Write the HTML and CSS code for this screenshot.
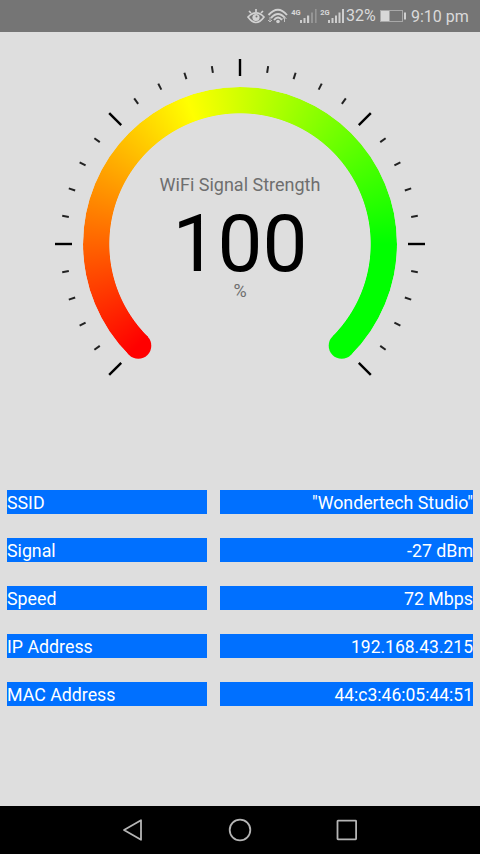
FILE: index.html
```html
<!DOCTYPE html>
<html lang="en">
<head>
    <meta charset="UTF-8">
    <meta name="viewport" content="width=device-width, initial-scale=1.0">
    <title>WiFi Signal Strength</title>
    <link rel="stylesheet" href="styles.css">
</head>
<body>
    <header class="status-bar">
        <svg class="status-icons" width="100" height="32" viewBox="0 0 100 32">
            <!-- eye -->
            <g fill="none" stroke="#d2d2d2" stroke-width="1.7">
                <path d="M2 17Q10 9 18 17Q10 28 2 17Z"/>
                <path d="M3 11l2 2M10 9v3M17 11l-2 2"/>
            </g>
            <circle cx="10" cy="17.5" r="3.6" fill="#d2d2d2"/>
            <circle cx="10.5" cy="16.5" r="1" fill="#757575"/>
            <!-- wifi -->
            <g fill="none" stroke="#d2d2d2" stroke-width="1.9">
                <path d="M22.5 15Q32 4.5 41 15"/>
                <path d="M25 18Q32 10 39 18"/>
                <path d="M28 20Q32 15 36 20"/>
            </g>
            <circle cx="32" cy="21.5" r="1.8" fill="#d2d2d2"/>
            <path d="M24 17v5M22 20l2 2l2-2M38.5 22v-5M36.5 19l2-2l2 2" fill="none" stroke="#c2c2c2"/>
            <!-- signal bars -->
            <g fill="#cecece">
                <path d="M54 20h2v3h-2zM57.5 18h2v5h-2zM61 15.5h2.2v7.5H61z"/>
                <path d="M82 20h2v3h-2zM85.5 18h2v5h-2zM89 15.5h2v7.5h-2zM92.5 12.5h2v10.5h-2zM96 9h2v14h-2z"/>
            </g>
            <path d="M65 12.5h2v10.5h-2zM69 9h1.6v14H69z" fill="#969696"/>
            <text x="45.3" y="15">4G</text>
            <text x="74.3" y="15">2G</text>
        </svg>
        <span class="percent">32%</span>
        <svg class="battery" width="28" height="32" viewBox="0 0 28 32">
            <rect x="1.5" y="10.5" width="22" height="11" fill="none" stroke="#a8a8a8"/>
            <rect x="2" y="11" width="8.5" height="10" fill="#d8d8d8"/>
            <path d="M25 12.5h2v7h-2z" fill="#d0d0d0"/>
        </svg>
        <span class="clock">9:10 pm</span>
    </header>

    <main class="content">
        <div class="gauge">
            <div class="gauge-arc"></div>
            <svg class="gauge-ticks" width="376" height="376" viewBox="-188 -188 376 376">
                <circle cx="-101.7" cy="101.7" r="13" fill="#ff0000"/>
                <circle cx="101.7" cy="101.7" r="13" fill="#00ff00"/>
                <g id="ticks"></g>
            </svg>
            <div class="gauge-text">
                <div class="title">WiFi Signal Strength</div>
                <div class="value">100</div>
                <div class="unit">%</div>
            </div>
        </div>

        <div class="details">
            <div class="label">SSID</div>
            <div class="data">"Wondertech Studio"</div>
            <div class="label">Signal</div>
            <div class="data">-27 dBm</div>
            <div class="label">Speed</div>
            <div class="data">72 Mbps</div>
            <div class="label">IP Address</div>
            <div class="data number">192.168.43.215</div>
            <div class="label">MAC Address</div>
            <div class="data number">44:c3:46:05:44:51</div>
        </div>
    </main>

    <nav class="nav-bar">
        <svg width="24" height="24" viewBox="0 0 24 24"><path d="M3 12L20 2.2V21.8Z"/></svg>
        <svg width="24" height="24" viewBox="0 0 24 24"><circle cx="12" cy="12" r="10.3"/></svg>
        <svg width="24" height="24" viewBox="0 0 24 24"><rect x="2.5" y="2.7" width="18.6" height="18.6" rx="0.5"/></svg>
    </nav>

    <script>
        // 270 degree scale, a tick every 9 degrees, every fifth one is major
        const ticks = document.getElementById('ticks');
        for (let i = 0; i <= 30; i++) {
            const major = i % 5 === 0;
            const line = document.createElementNS('http://www.w3.org/2000/svg', 'line');
            line.setAttribute('y1', major ? -185 : -180);
            line.setAttribute('y2', major ? -168 : -173.3);
            line.setAttribute('class', major ? 'tick major' : 'tick');
            line.setAttribute('transform', `rotate(${-135 + i * 9})`);
            ticks.appendChild(line);
        }
    </script>
</body>
</html>
```
FILE: styles.css
```css
* {
    margin: 0;
    padding: 0;
    box-sizing: border-box;
}

body {
    font-family: Roboto, sans-serif;
    background: #dedede;
    height: 854px;
    display: flex;
    flex-direction: column;
    overflow: hidden;
}

svg {
    display: block;
}

.status-bar {
    height: 32px;
    background: #757575;
    color: #dadada;
    display: flex;
    align-items: center;
    justify-content: flex-end;
    padding-right: 11px;
    font-size: 16px;
    line-height: 32px;
    white-space: nowrap;
}

.status-icons {
    flex: none;
}

.status-icons text {
    font-size: 7.5px;
    font-weight: 700;
    fill: #d8d8d8;
}

.percent {
    width: 33px;
}

.battery {
    flex: none;
}

.clock {
    width: 62px;
    padding-left: 4px;
    padding-top: 1px;
}

.content {
    flex: 1;
    padding-top: 24px;
}

.gauge {
    display: grid;
    place-items: center;
    width: 376px;
    height: 376px;
    margin: 0 auto;
}

.gauge > * {
    grid-area: 1 / 1;
}

.gauge-arc {
    width: 314px;
    height: 314px;
    border-radius: 50%;
    background: conic-gradient(from 225deg, #ff0000 0deg, #ffff00 115deg, #00ff00 225deg, #00ff00 270deg, transparent 270deg);
    -webkit-mask: radial-gradient(circle, transparent 130.3px, #000 131.1px);
    mask: radial-gradient(circle, transparent 130.3px, #000 131.1px);
}

.tick {
    stroke: #222222;
    stroke-width: 2;
}

.major {
    stroke: #000000;
    stroke-width: 2.4;
}

.gauge-text {
    align-self: start;
    padding-top: 118px;
    text-align: center;
    color: #6e6e6e;
    font-size: 18px;
    line-height: 22px;
}

.value {
    color: #000000;
    font-size: 80px;
    line-height: 66px;
    margin-top: 15px;
}

.unit {
    margin-top: 3px;
}

.details {
    display: grid;
    grid-template-columns: 200px 253px;
    grid-auto-rows: 24px;
    gap: 24px 13px;
    padding: 0 7px;
    margin-top: 58px;
    color: #ffffff;
    font-size: 17.8px;
    line-height: 26px;
}

.label,
.data {
    background: #0070ff;
    white-space: nowrap;
}

.data {
    text-align: right;
}

.number {
    font-size: 17.5px;
}

.nav-bar {
    height: 48px;
    background: #000000;
    display: flex;
    justify-content: center;
    align-items: center;
    gap: 83px;
}

.nav-bar svg {
    fill: none;
    stroke: #b5b5b5;
    stroke-width: 1.8;
    stroke-linejoin: round;
}
```
